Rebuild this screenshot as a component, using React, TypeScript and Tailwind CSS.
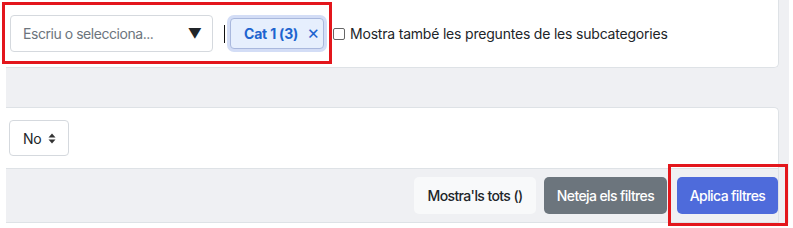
import React from "react";

export default function App() {
  return (
    <div
      className="relative w-[793px] h-[228px] bg-white overflow-hidden text-[#212529]"
      style={{ fontFamily: "Inter, 'Noto Sans', sans-serif" }}
    >
      <div className="ml-[6px] w-[783px] h-[223px] bg-[#eff0f3] flex flex-col pr-[10px]">
        {/* top card */}
        <div className="h-[68px] bg-white border-b border-r border-[#dee2e6] rounded-br-[5px] flex items-center pl-[4px]">
          <div className="w-[203px] h-[37px] border border-[#d5d9de] rounded-[4px] flex items-center justify-between pl-[12px] pr-[10px]">
            <span className="text-[14px] tracking-[-0.45px] text-[#6c757d]">Escriu o selecciona...</span>
            <span className="text-[14px] text-[#212529] leading-none">▼</span>
          </div>
          <div className="ml-[11px] w-[1px] h-[18px] bg-[#111]" />
          <div className="ml-[5px] h-[31px] w-[94px] rounded-[4px] bg-[#e6effd] border border-[#a9b8dd] ring-[3px] ring-[#d3ddf6] flex items-center pl-[13px] gap-[9px]">
            <span className="text-[14px] font-bold tracking-[-0.2px] text-[#1d64cf]">Cat 1 (3)</span>
            <span className="text-[19px] leading-none text-[#1d64cf] -mt-[2px]">×</span>
          </div>
          <div className="ml-[9px] w-[12px] h-[12px] border border-[#666] rounded-[2px] bg-white" />
          <span className="ml-[5px] text-[14px] tracking-[-0.2px] text-[#212529]">
            Mostra també les preguntes de les subcategories
          </span>
        </div>
        {/* gap */}
        <div className="h-[39px]" />
        {/* second card */}
        <div className="bg-white border-t border-r border-[#dee2e6] rounded-tr-[5px] flex flex-col">
          <div className="h-[60px] pl-[3px] pt-[12px]">
            <div className="w-[60px] h-[36px] border border-[#d5d9de] rounded-[4px] flex items-center pl-[13px] gap-[6px]">
              <span className="text-[14px] tracking-[-0.2px] text-[#212529]">No</span>
              <svg width="8" height="11" viewBox="0 0 8 11">
                <path d="M4 0.5 L7.5 4.5 L0.5 4.5 Z" fill="#333" />
                <path d="M4 10.5 L7.5 6.5 L0.5 6.5 Z" fill="#333" />
              </svg>
            </div>
          </div>
          <div className="h-[55px] bg-[#eff0f3] border-t border-b border-[#dee2e6] flex items-center justify-end">
            <div className="h-[37px] w-[122px] rounded-[5px] bg-[#f8f9fa] flex items-center justify-center text-[14px] font-medium tracking-[-0.6px] text-[#212529]">
              Mostra'ls tots ()
            </div>
            <div className="ml-[8px] h-[37px] w-[123px] rounded-[5px] bg-[#6c757d] flex items-center justify-center text-[14px] font-medium tracking-[-0.6px] text-white">
              Neteja els filtres
            </div>
            <div className="ml-[10px] h-[37px] w-[101px] rounded-[5px] bg-[#4e6bdb] flex items-center justify-center text-[14px] font-medium tracking-[-0.6px] text-white">
              Aplica filtres
            </div>
          </div>
        </div>
      </div>
      {/* highlight boxes */}
      <div className="absolute left-[2px] top-[2px] w-[330px] h-[62px] border-[3px] border-[#e3161c]" />
      <div className="absolute left-[668px] top-[164px] w-[120px] h-[62px] border-[3px] border-[#e3161c]" />
    </div>
  );
}
